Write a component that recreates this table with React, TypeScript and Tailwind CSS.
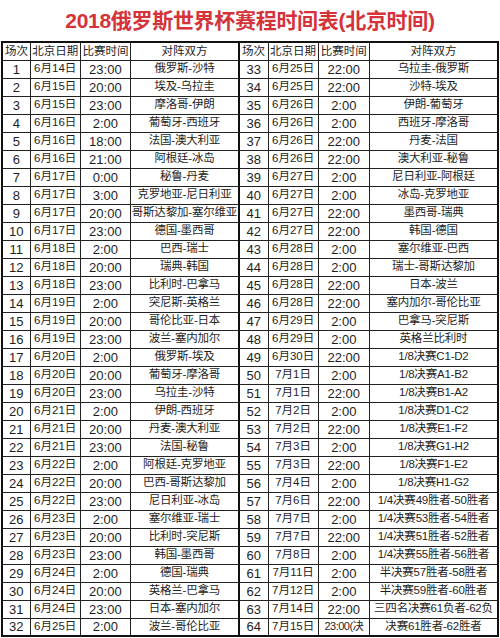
import React from 'react';

type Match = [string, string, string, string];

const left: Match[] = [
  ['1', '6月14日', '23:00', '俄罗斯-沙特'],
  ['2', '6月15日', '20:00', '埃及-乌拉圭'],
  ['3', '6月15日', '23:00', '摩洛哥-伊朗'],
  ['4', '6月16日', '2:00', '葡萄牙-西班牙'],
  ['5', '6月16日', '18:00', '法国-澳大利亚'],
  ['6', '6月16日', '21:00', '阿根廷-冰岛'],
  ['7', '6月17日', '0:00', '秘鲁-丹麦'],
  ['8', '6月17日', '3:00', '克罗地亚-尼日利亚'],
  ['9', '6月17日', '20:00', '哥斯达黎加-塞尔维亚'],
  ['10', '6月17日', '23:00', '德国-墨西哥'],
  ['11', '6月18日', '2:00', '巴西-瑞士'],
  ['12', '6月18日', '20:00', '瑞典-韩国'],
  ['13', '6月18日', '23:00', '比利时-巴拿马'],
  ['14', '6月19日', '2:00', '突尼斯-英格兰'],
  ['15', '6月19日', '20:00', '哥伦比亚-日本'],
  ['16', '6月19日', '23:00', '波兰-塞内加尔'],
  ['17', '6月20日', '2:00', '俄罗斯-埃及'],
  ['18', '6月20日', '20:00', '葡萄牙-摩洛哥'],
  ['19', '6月20日', '23:00', '乌拉圭-沙特'],
  ['20', '6月21日', '2:00', '伊朗-西班牙'],
  ['21', '6月21日', '20:00', '丹麦-澳大利亚'],
  ['22', '6月21日', '23:00', '法国-秘鲁'],
  ['23', '6月22日', '2:00', '阿根廷-克罗地亚'],
  ['24', '6月22日', '20:00', '巴西-哥斯达黎加'],
  ['25', '6月22日', '23:00', '尼日利亚-冰岛'],
  ['26', '6月23日', '2:00', '塞尔维亚-瑞士'],
  ['27', '6月23日', '20:00', '比利时-突尼斯'],
  ['28', '6月23日', '23:00', '韩国-墨西哥'],
  ['29', '6月24日', '2:00', '德国-瑞典'],
  ['30', '6月24日', '20:00', '英格兰-巴拿马'],
  ['31', '6月24日', '23:00', '日本-塞内加尔'],
  ['32', '6月25日', '2:00', '波兰-哥伦比亚'],
];

const right: Match[] = [
  ['33', '6月25日', '22:00', '乌拉圭-俄罗斯'],
  ['34', '6月25日', '22:00', '沙特-埃及'],
  ['35', '6月26日', '2:00', '伊朗-葡萄牙'],
  ['36', '6月26日', '2:00', '西班牙-摩洛哥'],
  ['37', '6月26日', '22:00', '丹麦-法国'],
  ['38', '6月26日', '22:00', '澳大利亚-秘鲁'],
  ['39', '6月27日', '2:00', '尼日利亚-阿根廷'],
  ['40', '6月27日', '2:00', '冰岛-克罗地亚'],
  ['41', '6月27日', '22:00', '墨西哥-瑞典'],
  ['42', '6月27日', '22:00', '韩国-德国'],
  ['43', '6月28日', '2:00', '塞尔维亚-巴西'],
  ['44', '6月28日', '2:00', '瑞士-哥斯达黎加'],
  ['45', '6月28日', '22:00', '日本-波兰'],
  ['46', '6月28日', '22:00', '塞内加尔-哥伦比亚'],
  ['47', '6月29日', '2:00', '巴拿马-突尼斯'],
  ['48', '6月29日', '2:00', '英格兰比利时'],
  ['49', '6月30日', '22:00', '1/8决赛C1-D2'],
  ['50', '7月1日', '2:00', '1/8决赛A1-B2'],
  ['51', '7月1日', '22:00', '1/8决赛B1-A2'],
  ['52', '7月2日', '2:00', '1/8决赛D1-C2'],
  ['53', '7月2日', '22:00', '1/8决赛E1-F2'],
  ['54', '7月3日', '2:00', '1/8决赛G1-H2'],
  ['55', '7月3日', '22:00', '1/8决赛F1-E2'],
  ['56', '7月4日', '2:00', '1/8决赛H1-G2'],
  ['57', '7月6日', '22:00', '1/4决赛49胜者-50胜者'],
  ['58', '7月7日', '2:00', '1/4决赛53胜者-54胜者'],
  ['59', '7月7日', '22:00', '1/4决赛51胜者-52胜者'],
  ['60', '7月8日', '2:00', '1/4决赛55胜者-56胜者'],
  ['61', '7月11日', '2:00', '半决赛57胜者-58胜者'],
  ['62', '7月12日', '2:00', '半决赛59胜者-60胜者'],
  ['63', '7月14日', '22:00', '三四名决赛61负者-62负'],
  ['64', '7月15日', '23:00(决', '决赛61胜者-62胜者'],
];

const cell = 'border border-[#222] h-[18px] p-0 text-center whitespace-nowrap overflow-hidden leading-none';

export default function App() {
  return (
    <div className="w-[500px] h-[638px] bg-white px-px text-[#1e1e1e] font-['Liberation_Sans','Noto_Sans_CJK_SC',sans-serif]">
      <h1 className="h-[41px] flex items-center justify-center text-[21px] font-bold text-[#d5323a] tracking-[-0.3px]">
        2018俄罗斯世界杯赛程时间表(北京时间)
      </h1>
      <table className="w-[498px] table-fixed border-collapse border-2 border-[#111] text-[11.5px]">
        <colgroup>
          <col className="w-[28px]" />
          <col className="w-[50px]" />
          <col className="w-[50px]" />
          <col className="w-[108px]" />
          <col className="w-[29px]" />
          <col className="w-[50px]" />
          <col className="w-[51px]" />
          <col className="w-[128px]" />
        </colgroup>
        <tbody>
          <tr>
            <td className={cell + ' text-left pl-[2px]'}>场次</td>
            <td className={cell}>北京日期</td>
            <td className={cell}>比赛时间</td>
            <td className={cell + ' border-r-2 border-r-[#111]'}>对阵双方</td>
            <td className={cell + ' text-left pl-[2px]'}>场次</td>
            <td className={cell}>北京日期</td>
            <td className={cell}>比赛时间</td>
            <td className={cell}>对阵双方</td>
          </tr>
          {left.map((l, i) => {
            const r = right[i];
            const long = r[2].length > 5;
            return (
              <tr key={l[0]}>
                <td className={cell + ' text-[13px]'}>{l[0]}</td>
                <td className={cell}>{l[1]}</td>
                <td className={cell + ' text-[13px]'}>{l[2]}</td>
                <td className={cell + ' border-r-2 border-r-[#111] tracking-[-0.2px]'}>{l[3]}</td>
                <td className={cell + ' text-[13px]'}>{r[0]}</td>
                <td className={cell}>{r[1]}</td>
                <td className={cell + (long ? ' text-[11px] tracking-[-0.5px]' : ' text-[13px]')}>{r[2]}</td>
                <td className={cell + ' tracking-[-0.2px]'}>{r[3]}</td>
              </tr>
            );
          })}
        </tbody>
      </table>
    </div>
  );
}
